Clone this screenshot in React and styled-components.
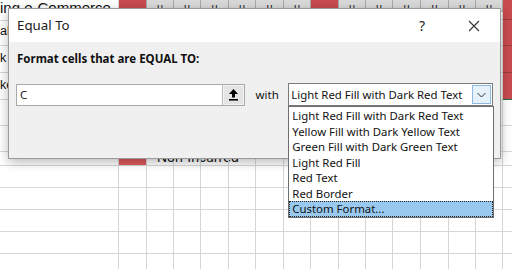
import React from "react";
import styled, { createGlobalStyle } from "styled-components";

const GlobalStyle = createGlobalStyle`
  html, body {
    margin: 0;
    padding: 0;
    overflow: hidden;
    background: #ffffff;
  }
`;

const UI_FONT = `"Noto Sans", "Open Sans", "DejaVu Sans", sans-serif`;
const SHEET_FONT = `"Liberation Sans", "Noto Sans", sans-serif`;

const colWidths = [119, 28, 27, 27, 28, 27, 28, 27, 28, 27, 27, 28, 28, 27, 27, 20];
const rowHeights = [12, 8, 26, 27, 27, 26, 26, 14, 22, 22, 22, 22, 22];

const Stage = styled.div`
  position: relative;
  width: 512px;
  height: 269px;
  overflow: hidden;
  background: #ffffff;
`;

const Sheet = styled.div`
  display: flex;
  flex-direction: column;
  font-family: ${SHEET_FONT};
  font-size: 13px;
  color: #111;
`;

const SheetRow = styled.div`
  display: flex;
  height: ${(p) => p.$h}px;
  flex-shrink: 0;
`;

const Cell = styled.div`
  box-sizing: border-box;
  flex-shrink: 0;
  width: ${(p) => p.$w}px;
  height: 100%;
  position: relative;
  overflow: visible;
  white-space: nowrap;
  background: ${(p) => p.$fill || "transparent"};
  border-right: 1px solid ${(p) => p.$line || "#d6d6d6"};
  border-bottom: 1px solid ${(p) => (p.$noBottom ? "transparent" : p.$line || "#d6d6d6")};
  display: flex;
  align-items: flex-end;
  justify-content: ${(p) => (p.$center ? "center" : "flex-start")};
  line-height: 1;
  padding-bottom: ${(p) => p.$pad ?? 4}px;
`;

const CellText = styled.span`
  font-size: ${(p) => p.$size || 13}px;
  margin-bottom: ${(p) => p.$drop || 0}px;
  margin-left: ${(p) => p.$indent || 0}px;
`;

const HeadMark = styled.span`
  font-size: 11px;
  line-height: 1;
  color: #222;
  margin-bottom: -3px;
`;

const Dialog = styled.div`
  position: absolute;
  left: 8px;
  top: 8px;
  width: 493px;
  height: 151px;
  box-sizing: border-box;
  border: 1px solid #9a9a9a;
  background: #f0f0f0;
  box-shadow: 0 3px 10px rgba(0, 0, 0, 0.28);
  font-family: ${UI_FONT};
  display: flex;
  flex-direction: column;
`;

const TitleBar = styled.div`
  height: 33px;
  background: #ffffff;
  display: flex;
  align-items: center;
  padding-left: 8px;
`;

const Title = styled.div`
  flex: 1;
  font-size: 13.3px;
  color: #1a1a1a;
  padding-bottom: 1px;
`;

const TitleButton = styled.div`
  width: ${(p) => p.$w}px;
  height: 33px;
  display: flex;
  align-items: center;
  justify-content: center;
  font-size: 14px;
  color: #222;
`;

const Body = styled.div`
  flex: 1;
  padding: 9px 7px 0 7px;
  display: flex;
  flex-direction: column;
`;

const Prompt = styled.div`
  font-size: 11.5px;
  font-weight: 700;
  color: #111;
  padding-left: 1px;
  height: 16px;
  line-height: 16px;
`;

const ControlRow = styled.div`
  display: flex;
  align-items: center;
  margin-top: 16px;
`;

const RefEdit = styled.div`
  box-sizing: border-box;
  width: 230px;
  height: 22px;
  border: 1px solid #a9a9a9;
  background: #ffffff;
  display: flex;
  align-items: stretch;
`;

const RefText = styled.div`
  flex: 1;
  font-size: 11.5px;
  line-height: 20px;
  padding-left: 3px;
  color: #222;
`;

const RefButton = styled.div`
  box-sizing: border-box;
  width: 22px;
  background: #e4e4e4;
  border-left: 1px solid #b9b9b9;
  box-shadow: inset 0 0 0 1px #f4f4f4;
  display: flex;
  align-items: center;
  justify-content: center;
`;

const WithLabel = styled.div`
  font-size: 11.5px;
  color: #111;
  margin-left: 11px;
  width: 33px;
`;

const SelectWrap = styled.div`
  position: relative;
  width: 206px;
`;

const SelectBox = styled.div`
  box-sizing: border-box;
  height: 23px;
  border: 1px solid #7a7a7a;
  background: #ffffff;
  display: flex;
  align-items: center;
  padding-left: 2px;
  font-size: 11.4px;
  color: #111;
`;

const SelectValue = styled.div`
  flex: 1;
  white-space: nowrap;
`;

const DropButton = styled.div`
  box-sizing: border-box;
  width: 19px;
  height: 19px;
  margin-right: 1px;
  background: #e5f1fb;
  border: 1px solid #8fb9e0;
  display: flex;
  align-items: center;
  justify-content: center;
`;

const ListBox = styled.div`
  position: absolute;
  left: 0;
  top: 23px;
  width: 206px;
  box-sizing: border-box;
  border: 1px solid #6e6e6e;
  background: #ffffff;
  padding: 1px 0 0 0;
  z-index: 3;
`;

const ListItem = styled.div`
  box-sizing: border-box;
  height: 15.5px;
  line-height: 14px;
  font-size: 11.4px;
  padding-left: 2px;
  white-space: nowrap;
  color: #111;
  background: ${(p) => (p.$active ? "#99c9ef" : "transparent")};
  border: 1px dotted ${(p) => (p.$active ? "#222" : "transparent")};
`;

const options = [
  "Light Red Fill with Dark Red Text",
  "Yellow Fill with Dark Yellow Text",
  "Green Fill with Dark Green Text",
  "Light Red Fill",
  "Red Text",
  "Red Border",
  "Custom Format...",
];

function CloseIcon() {
  return (
    <svg width="12" height="12" viewBox="0 0 12 12">
      <path d="M1 1 L11 11 M11 1 L1 11" stroke="#333" strokeWidth="1.1" fill="none" />
    </svg>
  );
}

function CollapseIcon() {
  return (
    <svg width="11" height="13" viewBox="0 0 11 13">
      <path d="M5.5 1 L10 6 L7 6 L7 9.5 L4 9.5 L4 6 L1 6 Z" fill="#000" />
      <rect x="1" y="11" width="9" height="1.6" fill="#000" />
    </svg>
  );
}

function ChevronIcon() {
  return (
    <svg width="9" height="6" viewBox="0 0 9 6">
      <path d="M0.5 1 L4.5 5 L8.5 1" stroke="#333" strokeWidth="1" fill="none" />
    </svg>
  );
}

function sheetCell(r, c) {
  const red = "#c84b4f";
  const w = colWidths[c];
  if (r === 0) {
    if (c === 0)
      return (
        <Cell key={c} $w={w} $noBottom $pad={0}>
          <CellText $size={15} $drop={-4}>ing e-Commerce</CellText>
        </Cell>
      );
    if (c === 1 || c === 8)
      return <Cell key={c} $w={w} $fill={red} $line="#a8a8a8" />;
    if (c === 15) return <Cell key={c} $w={w} $fill={red} $noBottom $line="#9b3a3d" />;
    return (
      <Cell key={c} $w={w} $fill="#d9d9d9" $line="#a8a8a8" $center $pad={1}>
        <HeadMark>u</HeadMark>
      </Cell>
    );
  }
  if (c === 15 && r <= 4) return <Cell key={c} $w={w} $fill={red} $line={r === 4 ? "#217346" : "#9b3a3d"} />;
  if (c === 0) {
    const labels = { 2: "al", 3: "k", 4: "ke", 12: "2021" };
    return (
      <Cell key={c} $w={w} $pad={r === 12 ? 0 : 8}>
        {labels[r] ? (
          <CellText $size={r === 12 ? 14 : 12.5} $drop={r === 12 ? -7 : 0}>
            {labels[r]}
          </CellText>
        ) : null}
      </Cell>
    );
  }
  if (r === 7 && c === 1) return <Cell key={c} $w={w} $fill="#e0585c" />;
  if (r === 7 && c === 2)
    return (
      <Cell key={c} $w={w} $pad={1}>
        <CellText $size={14} $indent={10}>Non-Incurred</CellText>
      </Cell>
    );
  return <Cell key={c} $w={w} />;
}

export default function App() {
  return (
    <>
      <GlobalStyle />
      <Stage>
        <Sheet>
          {rowHeights.map((h, r) => (
            <SheetRow key={r} $h={h}>
              {colWidths.map((_, c) => sheetCell(r, c))}
            </SheetRow>
          ))}
        </Sheet>

        <Dialog>
          <TitleBar>
            <Title>Equal To</Title>
            <TitleButton $w={40}>?</TitleButton>
            <TitleButton $w={40} style={{ marginLeft: 12, marginRight: 6 }}>
              <CloseIcon />
            </TitleButton>
          </TitleBar>
          <Body>
            <Prompt>Format cells that are EQUAL TO:</Prompt>
            <ControlRow>
              <RefEdit>
                <RefText>C</RefText>
                <RefButton>
                  <CollapseIcon />
                </RefButton>
              </RefEdit>
              <WithLabel>with</WithLabel>
              <SelectWrap>
                <SelectBox>
                  <SelectValue>Light Red Fill with Dark Red Text</SelectValue>
                  <DropButton>
                    <ChevronIcon />
                  </DropButton>
                </SelectBox>
                <ListBox>
                  {options.map((o, i) => (
                    <ListItem key={o} $active={i === options.length - 1}>
                      {o}
                    </ListItem>
                  ))}
                </ListBox>
              </SelectWrap>
            </ControlRow>
          </Body>
        </Dialog>
      </Stage>
    </>
  );
}
